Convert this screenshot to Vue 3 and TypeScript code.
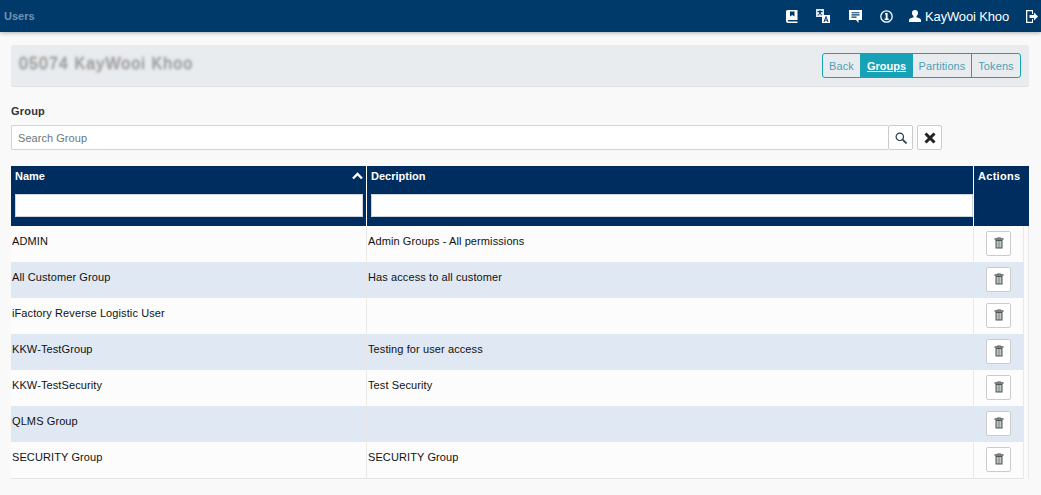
<script setup lang="ts">
interface Row { name: string; desc: string }
const rows: Row[] = [
  { name: 'ADMIN', desc: 'Admin Groups - All permissions' },
  { name: 'All Customer Group', desc: 'Has access to all customer' },
  { name: 'iFactory Reverse Logistic User', desc: '' },
  { name: 'KKW-TestGroup', desc: 'Testing for user access' },
  { name: 'KKW-TestSecurity', desc: 'Test Security' },
  { name: 'QLMS Group', desc: '' },
  { name: 'SECURITY Group', desc: 'SECURITY Group' },
]
const tabs = ['Back', 'Groups', 'Partitions', 'Tokens']
</script>

<template>
  <div class="page">
    <header class="topbar">
      <span class="brand">Users</span>
      <div class="nav">
        <svg class="ic ic-book" width="12" height="13" viewBox="0 0 12 13"><path d="M1.500 0H11.500v10H2.500a.8.8 0 0 0 0 1.600h9V13H2a2 2 0 0 1-2-2V1.500A1.500 1.500 0 0 1 1.500 0z" fill="#fff"/><path d="M4 1.500h4.500v5L6.250 5 4 6.500z" fill="#003a6b"/></svg>
        <svg class="ic ic-tr" width="14" height="14" viewBox="0 0 14 14"><rect x="0" y="0" width="8" height="8" fill="#dfe7ee"/><path d="M1.500 2.500h5M4 1.200v1.300M2 6.500l3.500-4M6 6.500L3 3" stroke="#003a6b" fill="none"/><rect x="6" y="6" width="8" height="8" fill="#fff"/><path d="M8 13l2-5.500 2 5.500M8.800 11.200h2.400" stroke="#003a6b" fill="none"/></svg>
        <svg class="ic ic-msg" width="13" height="13" viewBox="0 0 13 13"><path d="M0 0h13v10H9.500v3L7 10H0z" fill="#fff"/><path d="M2.500 2.700h8M2.500 4.900h8M2.500 7.100h5" stroke="#003a6b" stroke-width="1.100"/></svg>
        <svg class="ic ic-info" width="13" height="13" viewBox="0 0 13 13"><circle cx="6.500" cy="6.500" r="5.700" fill="none" stroke="#fff" stroke-width="1.300"/><path d="M5 3h2.600v5.600h1.100V10H4.600V8.600h1.100V4.400H5z" fill="#fff"/></svg>
        <span class="user">
          <svg width="12" height="12" viewBox="0 0 12 12"><path d="M6 0c1.900 0 3 1.200 3 3 0 1.300-.7 2.500-1.500 3.100v1.100c1.500.6 4.500.9 4.500 2.800v2H0v-2c0-1.900 3-2.200 4.500-2.800V6.100C3.700 5.500 3 4.300 3 3 3 1.200 4.100 0 6 0z" fill="#fff"/></svg>
          KayWooi Khoo
        </span>
        <svg class="ic ic-out" width="12" height="13" viewBox="0 0 12 13"><path d="M0 0h7v4H6V1.300H1.300v10.400H6V9h1v4H0z" fill="#fff"/><path d="M3.500 5h4.500V2.500L12 6.500l-4 4V8H3.500z" fill="#fff"/></svg>
      </div>
    </header>

    <main class="content">
      <section class="panel">
        <span class="masked">05074 KayWooi Khoo</span>
        <div class="tabs">
          <a v-for="t in tabs" :key="t" class="tab" :class="{ active: t === 'Groups' }">{{ t }}</a>
        </div>
      </section>

      <label class="group-label">Group</label>
      <div class="search">
        <input class="search-input" placeholder="Search Group" />
        <button class="btn btn-search">
          <svg width="12" height="12" viewBox="0 0 12 12"><circle cx="4.800" cy="4.800" r="3.700" fill="none" stroke="#24394a" stroke-width="1.200"/><path d="M7.600 7.600l3.900 3.900" stroke="#24394a" stroke-width="1.600"/></svg>
        </button>
        <button class="btn btn-clear">
          <svg width="12" height="12" viewBox="0 0 12 12"><path d="M1.500 1.500l9 9M10.500 1.500l-9 9" stroke="#222" stroke-width="3"/></svg>
        </button>
      </div>

      <div class="table">
        <div class="thead">
          <div class="th th-name">
            <div class="th-title"><span>Name</span>
              <svg width="11" height="8" viewBox="0 0 11 8"><path d="M1 6.500l4.500-4.500 4.500 4.500" fill="none" stroke="#fff" stroke-width="2.400"/></svg>
            </div>
            <input class="filter" />
          </div>
          <div class="th th-desc">
            <div class="th-title"><span>Decription</span></div>
            <input class="filter" />
          </div>
          <div class="th th-act"><div class="th-title"><span class="act-label">Actions</span></div></div>
        </div>
        <div class="tbody">
          <div class="rows">
            <div v-for="(r, i) in rows" :key="r.name" class="tr" :class="{ alt: i % 2 === 1 }">
              <div class="td td-name">{{ r.name }}</div>
              <div class="td td-desc">{{ r.desc }}</div>
              <div class="td td-act">
                <button class="del">
                  <svg width="10" height="12" viewBox="0 0 10 12"><path d="M3.500 1.500V.5h3v1" fill="none" stroke="#a8a294"/><path d="M.5 2h9" stroke="#2b2b2b" stroke-width="1.200"/><path d="M1.500 3h7v8.500h-7z" fill="#4d5654"/><path d="M3.200 4v6.500M5 4v6.500M6.800 4v6.500" stroke="#f2f5f2" stroke-width="1"/></svg>
                </button>
              </div>
            </div>
          </div>
          <div class="gutter"></div>
        </div>
      </div>
    </main>
  </div>
</template>

<style scoped>
.page { width: 1041px; height: 495px; overflow: hidden; background: #f9f9f9; font-family: "Liberation Sans", Arial, sans-serif; }
.topbar { height: 32px; background: #003a6b; box-shadow: 0 1px 4px rgba(0,0,0,.3); display: flex; align-items: center; justify-content: space-between; padding: 0 3px 0 4px; }
.brand { font-size: 11px; font-weight: 700; color: #6f94b3; }
.nav { display: flex; align-items: center; }
.ic { display: block; }
.ic-book { margin-right: 18px; }
.ic-tr { margin-right: 19px; }
.ic-msg { margin-right: 18px; }
.ic-info { margin-right: 16px; }
.ic-out { margin-left: 17px; }
.user { display: flex; align-items: center; gap: 4px; color: #fff; font-size: 13px; letter-spacing: -.15px; }
.content { padding: 13px 12px 0 11px; }
.panel { height: 42px; background: #e9ecef; border-bottom: 1px solid #dee2e6; box-sizing: border-box; display: flex; align-items: center; justify-content: space-between; padding: 0 8px; border-radius: 2px; }
.masked { font-size: 16px; font-weight: 400; color: #a2a2a2; filter: blur(1px); text-shadow: 0 0 3px #bdbdbd, 0 -1px 2px #c4c4c4, 0 1px 2px #c4c4c4; letter-spacing: 1.1px; white-space: nowrap; margin-bottom: 4px; }
.tabs { display: grid; grid-template-columns: 37px 52px 59px 49px; height: 25px; border: 1px solid #17a2b8; border-radius: 3px; box-sizing: border-box; }
.tab { display: flex; align-items: center; justify-content: center; font-size: 11px; letter-spacing: .1px; color: #4f9fb4; border-left: 1px solid #17a2b8; box-sizing: border-box; }
.tab:first-child { border-left: 0; }
.tab.active { background: #17a2b8; color: #fff; font-weight: 700; letter-spacing: 0; text-decoration: underline; }
.group-label { display: block; font-size: 11px; font-weight: 700; letter-spacing: .2px; color: #333; margin: 18px 0 7px; line-height: 13px; }
.search { display: flex; height: 25px; }
.search-input { width: 877px; box-sizing: border-box; border: 1px solid #ced4da; border-right: 0; background: #fff; padding: 0 6px; font: 11px "Liberation Sans", Arial, sans-serif; letter-spacing: .05px; outline: 0; border-radius: 2px 0 0 2px; }
.search-input::placeholder { color: #6c757d; opacity: 1; }
.btn { width: 25px; height: 25px; padding: 0; background: #fff; border: 1px solid #ccc; border-radius: 2px; display: flex; align-items: center; justify-content: center; box-sizing: border-box; }
.btn-clear { margin-left: 4px; }
.table { margin-top: 16px; width: 1018px; }
.thead { display: flex; height: 60px; background: #002d5f; color: #fff; font-size: 11px; font-weight: 700; }
.th { box-sizing: border-box; }
.th-name { width: 356px; padding: 0 3px 0 4px; border-right: 1px solid #fff; }
.th-desc { width: 607px; padding-left: 4px; border-right: 1px solid #fff; }
.th-act { width: 55px; padding-left: 4px; }
.act-label { letter-spacing: .3px; }
.th-title { height: 20px; display: flex; align-items: center; justify-content: space-between; }
.filter { display: block; width: 100%; height: 23px; margin-top: 8px; box-sizing: border-box; border: 1px solid #ced4da; background: #fff; padding: 0; outline: 0; }
.tbody { display: flex; }
.rows { width: 1012px; border-bottom: 1px solid #e4e4e4; }
.gutter { width: 6px; box-sizing: border-box; border-left: 1px solid #e8e8e8; border-right: 1px solid #e8e8e8; background: #fbfbfb; }
.tr { display: flex; height: 36px; background: #fcfcfc; font-size: 11px; letter-spacing: .1px; color: #111; }
.tr.alt { background: #dfe8f3; }
.td { box-sizing: border-box; display: flex; align-items: center; padding: 0 0 7px 1px; height: 36px; }
.td-name { width: 356px; border-right: 1px solid #e8e8e8; }
.td-desc { width: 607px; border-right: 1px solid #e8e8e8; }
.td-act { flex: 1; justify-content: center; padding: 0 0 2px 0; }
.del { width: 25px; height: 25px; padding: 0; background: #fff; border: 1px solid #ccc; border-radius: 2px; display: flex; align-items: center; justify-content: center; box-sizing: border-box; }
</style>
